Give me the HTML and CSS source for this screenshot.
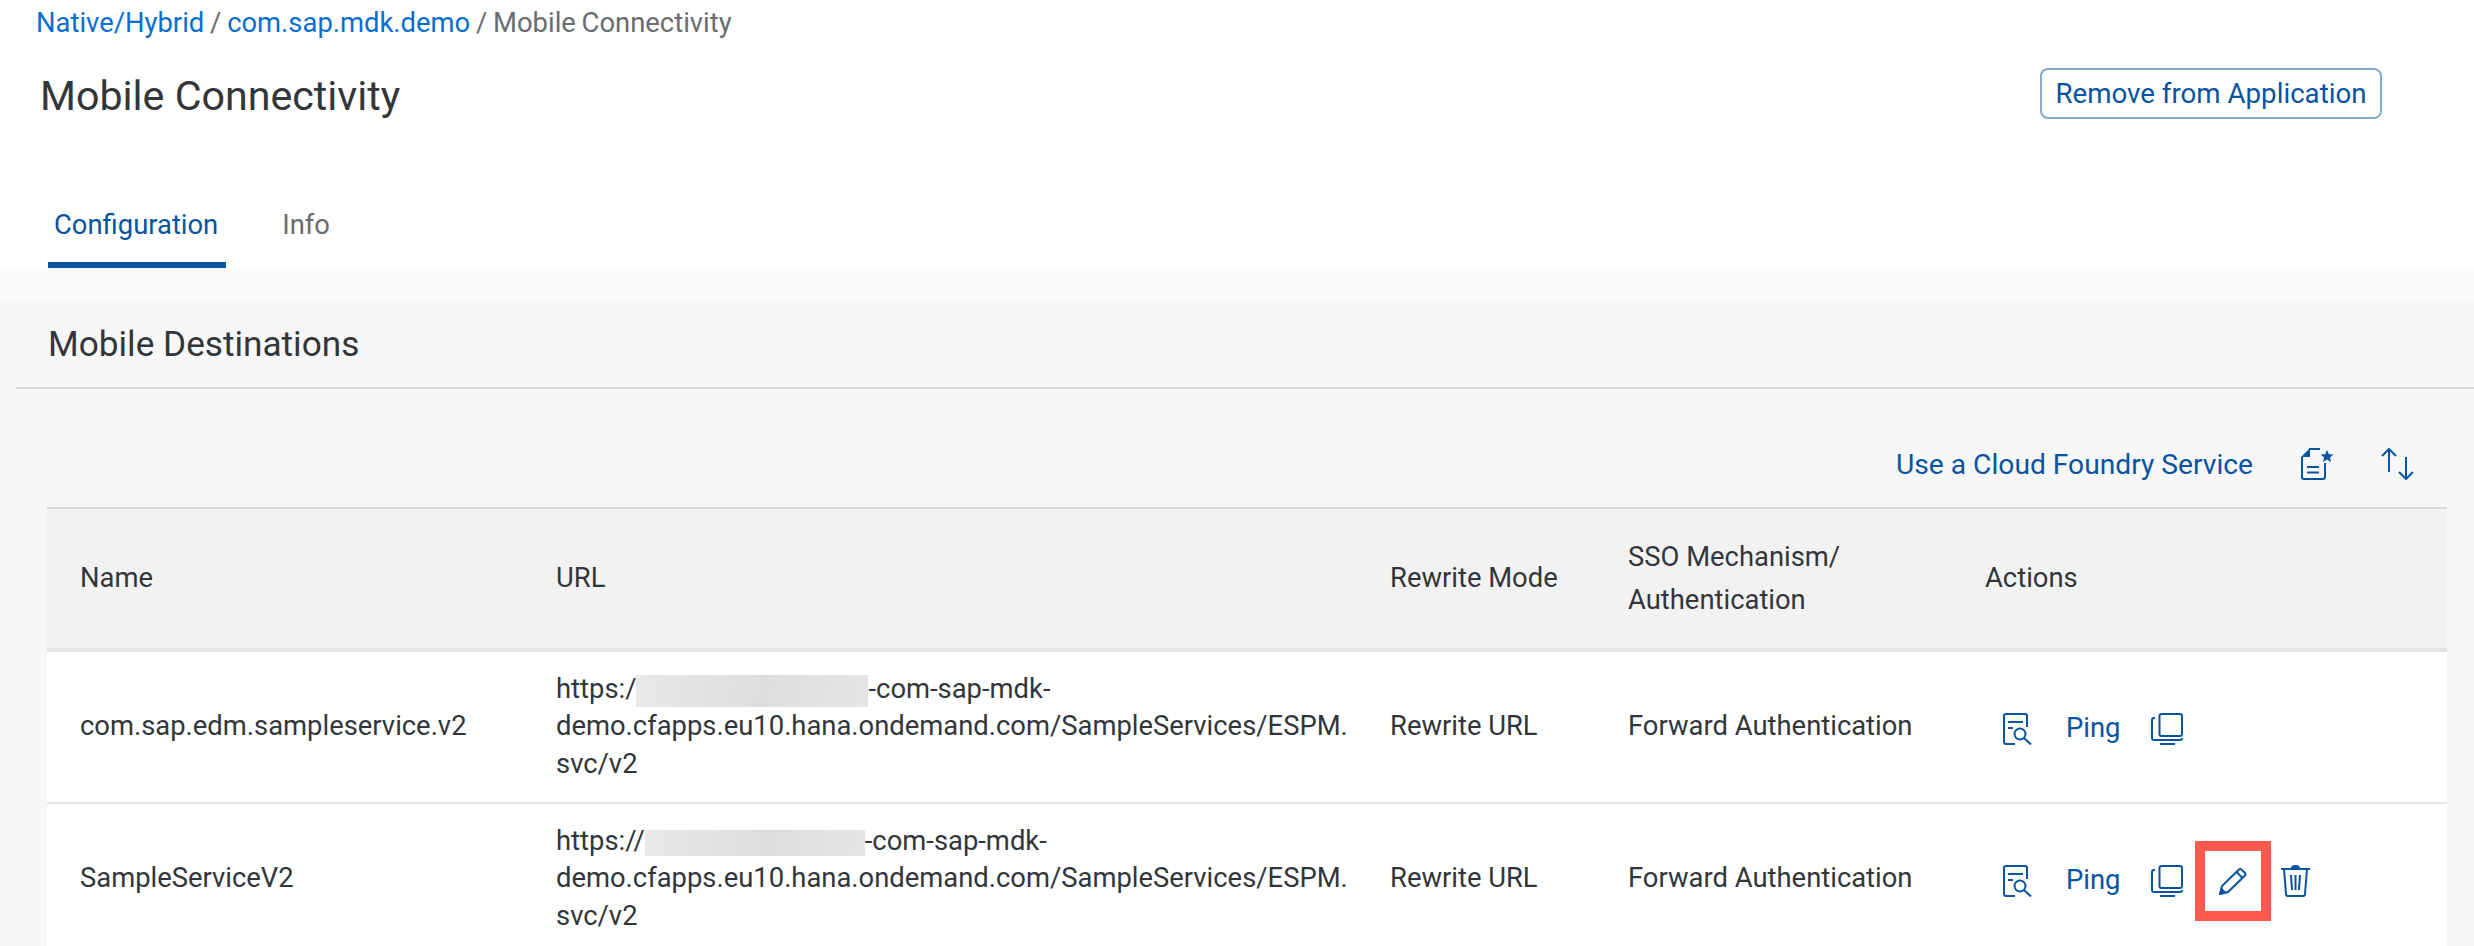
FILE: index.html
```html
<!DOCTYPE html>
<html lang="en">
<head>
<meta charset="UTF-8" />
<title>Mobile Connectivity</title>
<link rel="stylesheet" href="styles.css">
</head>
<body>
<div class="page-head">
  <div class="breadcrumb"><a>Native/Hybrid</a> / <a>com.sap.mdk.demo</a> / Mobile Connectivity</div>
  <div class="title-row">
    <h1>Mobile Connectivity</h1>
    <button class="btn-remove">Remove from Application</button>
  </div>
  <div class="tabs">
    <div class="tab active">Configuration</div>
    <div class="tab">Info</div>
  </div>
</div>

<div class="content">
  <div class="panel">
    <h2>Mobile Destinations</h2>
    <div class="toolbar">
      <a class="toolbar-link">Use a Cloud Foundry Service</a>
      <svg class="icon tb-doc" width="36" height="32" viewBox="0 0 36 32">
        <path d="M8 1H19M24 15V29a2 2 0 0 1-2 2H3a2 2 0 0 1-2-2V9" />
        <path class="fill" d="M9 0V9H0Z" />
        <path d="M6 19H18M6 24.500H18" />
        <path class="fill" d="M26 2l1.900 4.200 4.600.4-3.500 3 1.100 4.400-4.100-2.400-4 2.400 1.100-4.400-3.500-3 4.600-.4Z" />
      </svg>
      <svg class="icon tb-sort" width="34" height="32" viewBox="0 0 34 32">
        <path d="M8 1V24M1 8L8 1L15 8" />
        <path d="M25 9V31M18 24L25 31L32 24" />
      </svg>
    </div>

    <table class="dest-table">
      <colgroup>
        <col class="c-name"><col class="c-url"><col class="c-rewrite"><col class="c-sso"><col class="c-actions">
      </colgroup>
      <thead>
        <tr>
          <th>Name</th>
          <th>URL</th>
          <th>Rewrite Mode</th>
          <th>SSO Mechanism/<br>Authentication</th>
          <th>Actions</th>
        </tr>
      </thead>
      <tbody>
        <tr>
          <td>com.sap.edm.sampleservice.v2</td>
          <td class="url">https:/<span class="blur blur-a"></span>-com-sap-mdk-<br>demo.cfapps.eu10.hana.ondemand.com/SampleServices/ESPM.<br>svc/v2</td>
          <td>Rewrite URL</td>
          <td>Forward Authentication</td>
          <td>
            <div class="actions">
              <svg class="icon a-view" width="29" height="32" viewBox="0 0 29 32">
                <path d="M12 31H3a2 2 0 0 1-2-2V3a2 2 0 0 1 2-2H22a2 2 0 0 1 2 2V14" />
                <path d="M5 9H20M5 15H10" />
                <circle cx="17" cy="21" r="5.5" />
                <path d="M21 25L28 31.5" />
              </svg>
              <a class="ping">Ping</a>
              <svg class="icon a-copy" width="32" height="32" viewBox="0 0 32 32">
                <rect x="8.500" y="1" width="22.500" height="22" rx="2" />
                <path d="M4 5H3a2 2 0 0 0-2 2V25a2 2 0 0 0 2 2H29a2 2 0 0 0 2-2" />
                <path d="M9 31H24" />
              </svg>
            </div>
          </td>
        </tr>
        <tr>
          <td>SampleServiceV2</td>
          <td class="url">https://<span class="blur blur-b"></span>-com-sap-mdk-<br>demo.cfapps.eu10.hana.ondemand.com/SampleServices/ESPM.<br>svc/v2</td>
          <td>Rewrite URL</td>
          <td>Forward Authentication</td>
          <td>
            <div class="actions">
              <svg class="icon a-view" width="29" height="32" viewBox="0 0 29 32">
                <path d="M12 31H3a2 2 0 0 1-2-2V3a2 2 0 0 1 2-2H22a2 2 0 0 1 2 2V14" />
                <path d="M5 9H20M5 15H10" />
                <circle cx="17" cy="21" r="5.5" />
                <path d="M21 25L28 31.5" />
              </svg>
              <a class="ping">Ping</a>
              <svg class="icon a-copy" width="32" height="32" viewBox="0 0 32 32">
                <rect x="8.500" y="1" width="22.500" height="22" rx="2" />
                <path d="M4 5H3a2 2 0 0 0-2 2V25a2 2 0 0 0 2 2H29a2 2 0 0 0 2-2" />
                <path d="M9 31H24" />
              </svg>
              <div class="highlight">
                <svg class="icon" width="28" height="28" viewBox="0 0 28 28">
                  <path d="M1 27L3 19L20 2.500a2 2 0 0 1 2.500 0L26 6a2 2 0 0 1 0 2.500L9 25Z" />
                  <path d="M17.500 5L23.500 11" />
                  <path class="fill" d="M0 28L2 20L8 26Z" />
                </svg>
              </div>
              <svg class="icon a-trash" width="29" height="32" viewBox="0 0 29 32">
                <path d="M0 4H29M3 4L5 29a2 2 0 0 0 2 2H22a2 2 0 0 0 2-2L26 4" />
                <path class="fill" d="M10 3a4.500 3 0 0 1 9 0Z" />
                <path d="M10 10L11 25M14.500 10V25M19 10L18 25" />
              </svg>
            </div>
          </td>
        </tr>
      </tbody>
    </table>
  </div>
</div>
</body>
</html>
```

FILE: styles.css
```css
html, body {
  margin: 0;
  height: 946px;
  overflow: hidden;
}
body {
  font-family: Roboto, "Liberation Sans", sans-serif;
  background: #fafafa;
  color: #32363a;
}
.page-head {
  background: #fff;
  height: 268px;
  box-sizing: border-box;
}
.breadcrumb {
  height: 46px;
  line-height: 46px;
  padding-left: 36px;
  font-size: 27.4px;
  word-spacing: -1px;
  color: #6a6d70;
}
.breadcrumb a {
  color: #0a6ed1;
}
.title-row {
  height: 98px;
  display: flex;
  align-items: flex-start;
  justify-content: space-between;
  padding: 21px 92px 0 40px;
  box-sizing: border-box;
}
h1 {
  margin: 0;
  font-size: 41.2px;
  font-weight: 400;
  line-height: 58px;
}
.btn-remove {
  width: 342px;
  height: 51px;
  margin-top: 1px;
  background: #fff;
  border: 2px solid #86a9d1;
  border-radius: 8px;
  color: #0854a0;
  font: 400 27.7px Roboto, "Liberation Sans", sans-serif;
  padding: 0;
}
.tabs {
  display: flex;
  height: 124px;
  padding-left: 48px;
  gap: 50px;
  align-items: flex-end;
}
.tab {
  height: 80px;
  line-height: 74px;
  padding: 0 8px 0 6px;
  font-size: 27.4px;
  color: #6a6d70;
  box-sizing: border-box;
}
.tab.active {
  color: #0854a0;
  border-bottom: 6px solid #0854a0;
  border-radius: 4px 4px 0 0;
}
.content {
  padding-top: 32px;
}
.panel {
  background: #f7f7f7;
  height: 646px;
  overflow: hidden;
}
h2 {
  margin: 0 0 0 16px;
  height: 87px;
  padding-left: 32px;
  line-height: 88px;
  font-size: 35.2px;
  font-weight: 400;
  border-bottom: 2px solid #d9d9d9;
}
.toolbar {
  height: 118px;
  box-sizing: border-box;
  padding: 32px 59px 0 0;
  display: flex;
  align-items: center;
  justify-content: flex-end;
}
.toolbar-link {
  color: #0854a0;
  font-size: 28.2px;
  margin-right: 48px;
}
.tb-doc {
  margin-right: 44px;
}
.icon {
  display: block;
  flex: none;
  fill: none;
  stroke: #0854a0;
  stroke-width: 2;
}
.icon .fill {
  fill: #0854a0;
  stroke: none;
}
.dest-table {
  margin-left: 47px;
  width: 2400px;
  table-layout: fixed;
  border-collapse: collapse;
  font-size: 27.4px;
}
.c-name { width: 476px; }
.c-url { width: 834px; }
.c-rewrite { width: 238px; }
.c-sso { width: 357px; }
.dest-table th {
  background: #f2f2f2;
  height: 139px;
  padding: 0 0 0 33px;
  font-weight: 400;
  text-align: left;
  line-height: 43px;
  border-top: 2px solid #d9d9d9;
  border-bottom: 4px solid #e5e5e5;
}
.dest-table td {
  background: #fff;
  height: 150px;
  padding: 0 0 0 33px;
  line-height: 37.500px;
  border-bottom: 2px solid #e5e5e5;
}
.dest-table td.url {
  white-space: nowrap;
}
.blur {
  display: inline-block;
  vertical-align: middle;
  background: linear-gradient(100deg, #e8e9e8, #dcdddc 55%, #e6e6e6);
}
.blur-a {
  width: 232px;
  height: 32px;
}
.blur-b {
  width: 220px;
  height: 26px;
}
.actions {
  display: flex;
  align-items: center;
  height: 32px;
  padding-left: 18px;
  position: relative;
  top: 2px;
}
.ping {
  color: #0854a0;
  font-size: 27.4px;
  margin: 0 31px 0 34px;
}
.highlight {
  flex: none;
  width: 56px;
  height: 60px;
  border: 10px solid #ff5a4f;
  margin: 0 10px 0 12px;
  display: flex;
  align-items: center;
  justify-content: center;
}
```
